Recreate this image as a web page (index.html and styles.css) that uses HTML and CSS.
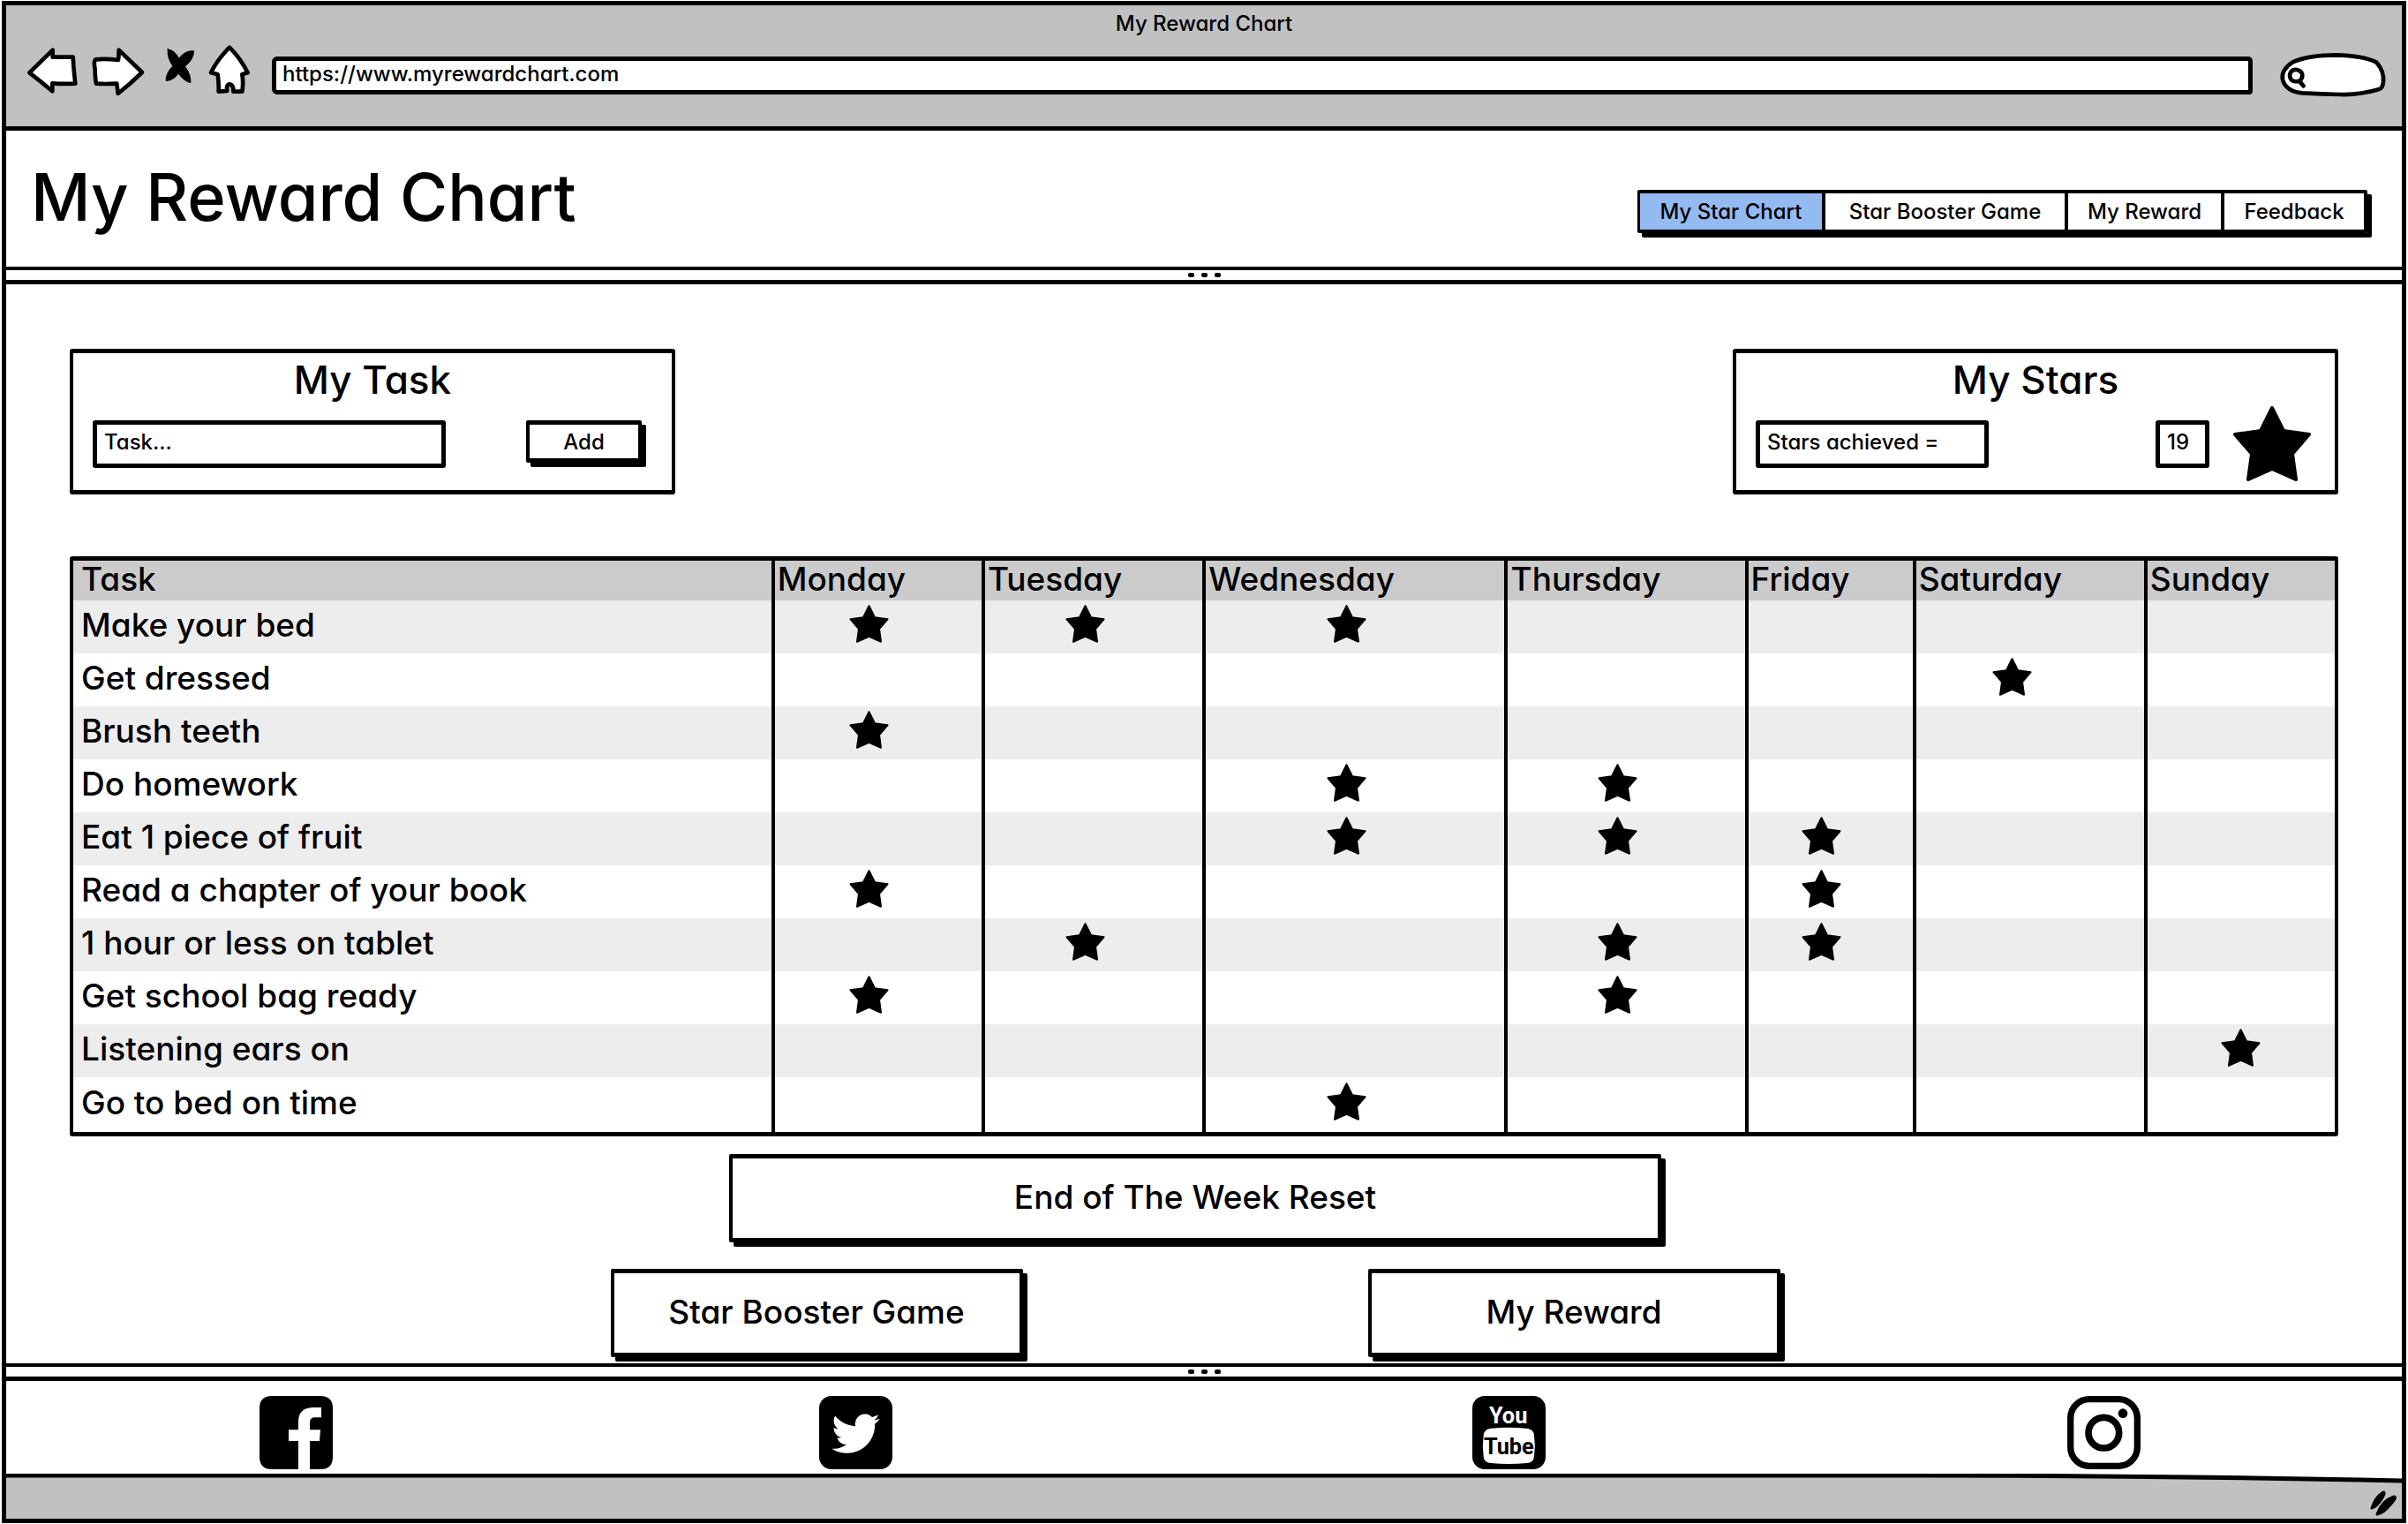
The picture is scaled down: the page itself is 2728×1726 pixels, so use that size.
FILE: index.html
```
<!DOCTYPE html>
<html lang="en">
<head>
<meta charset="utf-8">
<meta name="viewport" content="width=device-width, initial-scale=1">
<title>My Reward Chart</title>
<link rel="stylesheet" href="styles.css">
</head>
<body>
<svg class="defs" width="0" height="0" aria-hidden="true">
  <symbol id="star" viewBox="0 0 90 87">
    <path d="M45 3 58 29 87 33 68 55 72 84 45 72 18 84 22 55 3 33 32 29Z" fill="#000" stroke="#000" stroke-width="4" stroke-linejoin="round"/>
  </symbol>
</svg>
<div class="window">
  <header class="chrome">
    <div class="chrome-title">My Reward Chart</div>
    <div class="toolbar">
      <button class="tool" type="button" aria-label="Back">
        <svg width="60" height="60" viewBox="30 30 180 180"><path d="M40 121 119 44 119 68Q155 68 188 68Q190 110 196 158Q150 160 118 157L118 184Q78 150 40 121Z"/></svg>
      </button>
      <button class="tool" type="button" aria-label="Forward">
        <svg width="60" height="60" viewBox="247 30 180 180"><path d="M424 120 345 44Q345 62 343 78Q300 72 266 76Q258 80 264 110Q264 140 268 158Q300 160 338 158L342 192Q385 158 424 120Z"/></svg>
      </button>
      <button class="tool" type="button" aria-label="Stop">
        <svg width="50" height="60" viewBox="462 40 150 180"><path class="solid" d="M510 51Q532 52 548 82Q570 54 599 57Q600 84 569 110Q590 138 588 165Q566 162 546 134Q530 158 504 159Q502 134 527 108Q508 84 510 51Z"/></svg>
      </button>
      <button class="tool" type="button" aria-label="Home">
        <svg width="60" height="60" viewBox="648 35 180 180"><path d="M720 40Q758 78 782 126L763 132Q768 160 763 190L733 190Q734 166 720 165Q708 168 712 188L683 190Q684 160 680 132L657 126Q678 82 720 40Z"/></svg>
      </button>
      <input class="address" type="text" aria-label="Address" value="https://www.myrewardchart.com">
      <label class="search">
        <svg width="124" height="60" viewBox="123 36 372 180" aria-hidden="true">
          <path d="M205 187Q150 182 138 142Q132 108 172 82Q226 58 320 58Q410 60 456 82Q484 112 480 150Q478 172 464 175Q400 194 335 192Q270 190 205 187Z"/>
          <path class="glass" d="M194 146Q164 154 162 126Q166 106 186 108Q206 112 205 130Q202 144 194 146L209 163"/>
        </svg>
        <input type="search" aria-label="Search">
      </label>
    </div>
  </header>

  <div class="masthead">
    <h1>My Reward Chart</h1>
    <nav class="tabs">
      <a class="active" href="#chart">My Star Chart</a>
      <a href="#game">Star Booster Game</a>
      <a href="#reward">My Reward</a>
      <a href="#feedback">Feedback</a>
    </nav>
  </div>

  <div class="splitter"><i></i><i></i><i></i></div>

  <main>
    <div class="panels">
      <form class="panel">
        <h2>My Task</h2>
        <div class="panel-row">
          <input class="field field-task" type="text" aria-label="Task" placeholder="Task...">
          <button class="btn btn-add" type="button">Add</button>
        </div>
      </form>
      <section class="panel">
        <h2>My Stars</h2>
        <div class="panel-row panel-row-stars">
          <input class="field field-label" type="text" aria-label="Label" value="Stars achieved =">
          <input class="field field-count" type="text" aria-label="Stars achieved" value="19">
          <svg class="star-big" role="img" aria-label="Star"><use href="#star"/></svg>
        </div>
      </section>
    </div>

    <table class="chart" id="chart">
      <colgroup>
        <col class="w-task"><col class="w-mon"><col class="w-tue"><col class="w-wed"><col class="w-thu"><col class="w-fri"><col class="w-sat"><col class="w-sun">
      </colgroup>
      <thead>
        <tr><th>Task</th><th>Monday</th><th>Tuesday</th><th>Wednesday</th><th>Thursday</th><th>Friday</th><th>Saturday</th><th>Sunday</th></tr>
      </thead>
      <tbody>
        <tr><th>Make your bed</th><td><svg><use href="#star"/></svg></td><td><svg><use href="#star"/></svg></td><td><svg><use href="#star"/></svg></td><td></td><td></td><td class="sat"></td><td class="sun"></td></tr>
        <tr><th>Get dressed</th><td></td><td></td><td></td><td></td><td></td><td class="sat"><svg><use href="#star"/></svg></td><td class="sun"></td></tr>
        <tr><th>Brush teeth</th><td><svg><use href="#star"/></svg></td><td></td><td></td><td></td><td></td><td class="sat"></td><td class="sun"></td></tr>
        <tr><th>Do homework</th><td></td><td></td><td><svg><use href="#star"/></svg></td><td><svg><use href="#star"/></svg></td><td></td><td class="sat"></td><td class="sun"></td></tr>
        <tr><th>Eat 1 piece of fruit</th><td></td><td></td><td><svg><use href="#star"/></svg></td><td><svg><use href="#star"/></svg></td><td><svg><use href="#star"/></svg></td><td class="sat"></td><td class="sun"></td></tr>
        <tr><th>Read a chapter of your book</th><td><svg><use href="#star"/></svg></td><td></td><td></td><td></td><td><svg><use href="#star"/></svg></td><td class="sat"></td><td class="sun"></td></tr>
        <tr><th>1 hour or less on tablet</th><td></td><td><svg><use href="#star"/></svg></td><td></td><td><svg><use href="#star"/></svg></td><td><svg><use href="#star"/></svg></td><td class="sat"></td><td class="sun"></td></tr>
        <tr><th>Get school bag ready</th><td><svg><use href="#star"/></svg></td><td></td><td></td><td><svg><use href="#star"/></svg></td><td></td><td class="sat"></td><td class="sun"></td></tr>
        <tr><th>Listening ears on</th><td></td><td></td><td></td><td></td><td></td><td class="sat"></td><td class="sun"><svg><use href="#star"/></svg></td></tr>
        <tr><th>Go to bed on time</th><td></td><td></td><td><svg><use href="#star"/></svg></td><td></td><td></td><td class="sat"></td><td class="sun"></td></tr>
      </tbody>
    </table>

    <div class="actions">
      <button class="btn btn-reset" type="button">End of The Week Reset</button>
      <div class="actions-row">
        <button class="btn btn-large" type="button">Star Booster Game</button>
        <button class="btn btn-large" type="button">My Reward</button>
      </div>
    </div>
  </main>

  <div class="splitter"><i></i><i></i><i></i></div>

  <footer class="social">
    <a href="#facebook" aria-label="Facebook">
      <svg viewBox="0 0 249 249"><path fill-rule="evenodd" d="M42 0H207Q249 0 249 42V207Q249 249 207 249H171V153H204L207 115H171V90Q171 73 188 73H210V39H180Q132 41 132 88V115H99V153H132V249H42Q0 249 0 207V42Q0 0 42 0Z"/></svg>
    </a>
    <a href="#twitter" aria-label="Twitter">
      <svg viewBox="0 0 249 249"><rect width="249" height="249" rx="42"/><path fill="#fff" transform="translate(43 46) scale(6.8)" d="M23.953 4.57a10 10 0 01-2.825.775 4.958 4.958 0 002.163-2.723c-.951.555-2.005.959-3.127 1.184a4.92 4.92 0 00-8.384 4.482C7.69 8.095 4.067 6.13 1.64 3.162a4.822 4.822 0 00-.666 2.475c0 1.71.87 3.213 2.188 4.096a4.904 4.904 0 01-2.228-.616v.06a4.923 4.923 0 003.946 4.827 4.996 4.996 0 01-2.212.085 4.936 4.936 0 004.604 3.417 9.867 9.867 0 01-6.102 2.105c-.39 0-.779-.023-1.17-.067a13.995 13.995 0 007.557 2.209c9.053 0 13.998-7.496 13.998-13.985 0-.21 0-.42-.015-.63A9.935 9.935 0 0024 4.59z"/></svg>
    </a>
    <a href="#youtube" aria-label="YouTube">
      <svg viewBox="0 0 249 249"><rect width="249" height="249" rx="42"/><path fill="#fff" d="M64 110Q124 104 184 110Q208 112 210 134Q215 170 210 206Q208 226 184 228Q124 234 64 228Q40 226 38 206Q33 170 38 134Q40 112 64 110Z"/><text class="yt yt-top" x="122" y="93">You</text><text class="yt" x="124" y="199">Tube</text></svg>
    </a>
    <a href="#instagram" aria-label="Instagram">
      <svg viewBox="0 0 249 249"><rect x="11" y="11" width="227" height="227" rx="64" fill="none" stroke="#000" stroke-width="22"/><circle cx="124" cy="125" r="52" fill="none" stroke="#000" stroke-width="23"/><circle cx="189" cy="59" r="16"/></svg>
    </a>
  </footer>

  <div class="statusbar">
    <svg class="statusbar-edge" viewBox="0 0 2714 50" preserveAspectRatio="none" aria-hidden="true"><path d="M-6 2H2180Q2420 2 2722 8V60H-6Z"/></svg>
    <svg class="grip" width="36" height="32" viewBox="0 0 36 32" aria-hidden="true"><path d="M4 22Q8 9 17 4Q20 4 15 12Q9 21 4 22ZM10 29Q15 14 29 9Q33 9 26 17Q17 28 10 29Z"/></svg>
  </div>
</div>
</body>
</html>
```
FILE: styles.css
```
* { box-sizing: border-box; }

body {
  margin: 0;
  padding: 1px 2px;
  background: #fff;
  color: #000;
  font-family: Inter, "Noto Sans", sans-serif;
  font-feature-settings: "cv11";
  font-size: 24px;
  font-weight: 500;
  line-height: 40px;
}

h1, h2 { margin: 0; font-weight: 500; }
a { color: inherit; text-decoration: none; }
button, input { font: inherit; font-feature-settings: inherit; color: inherit; }
.defs { position: absolute; }

.window {
  display: flex;
  flex-direction: column;
  min-height: calc(100vh - 2px);
  border: 5px solid #000;
}

/* browser chrome */
.chrome {
  height: 142px;
  padding-top: 1px;
  background: #c1c1c1;
  border-bottom: 5px solid #000;
}
.chrome-title { text-align: center; }
.toolbar {
  display: flex;
  align-items: center;
  gap: 12px;
  margin-top: 5px;
  padding: 0 16px 0 23px;
}
.toolbar svg { display: block; overflow: visible; }
.toolbar path {
  fill: #fff;
  stroke: #000;
  stroke-width: 14px;
  stroke-linejoin: round;
  stroke-linecap: round;
}
.toolbar .solid { fill: #000; stroke-width: 2px; }
.toolbar .glass { fill: none; }
.tool { padding: 0 0 6px; border: 0; background: none; }
.address {
  flex: 1;
  min-width: 0;
  height: 43px;
  padding: 0 7px 4px;
  border: 5px solid #000;
  border-radius: 6px 5px 4px 6px;
  background: #fff;
}
.search { position: relative; margin-left: 17px; }
.search input {
  position: absolute;
  inset: 12px 14px 12px 34px;
  width: 76px;
  padding: 0;
  border: 0;
  outline: 0;
  background: none;
  appearance: none;
}

/* page header */
.masthead {
  display: flex;
  justify-content: space-between;
  align-items: flex-end;
  height: 154px;
  padding: 0 39px 38px 28px;
}
h1 { font-size: 74px; line-height: 82px; }
.tabs {
  display: grid;
  grid-template-columns: 206px 275px 177px 162px;
  border: 4px solid #000;
  border-left-width: 3px;
  box-shadow: 5px 5px 0 #000;
  border-radius: 2px;
}
.tabs a { padding-top: 1px; text-align: center; }
.tabs a + a { border-left: 4px solid #000; }
.tabs .active { background: #94baf2; }

.splitter {
  display: flex;
  justify-content: center;
  align-items: center;
  gap: 8px;
  height: 20px;
  border: solid #000;
  border-width: 4px 0 5px;
}
.splitter i { width: 7px; height: 5px; background: #000; border-radius: 2px; }

main { flex: 1; padding: 73px 72px 7px; }

/* panels */
.panels { display: flex; justify-content: space-between; }
.panel {
  width: 686px;
  padding-bottom: 10px;
  border: solid #000;
  border-width: 5px 4px;
  border-radius: 3px;
}
h2 { font-size: 44px; line-height: 60px; text-align: center; }
.panel-row {
  display: flex;
  align-items: center;
  justify-content: space-between;
  height: 85px;
  padding: 0 34px 0 22px;
}
.panel-row-stars { gap: 26px; padding-right: 26px; }
.field {
  height: 54px;
  padding: 0 8px 4px;
  border: 5px solid #000;
  border-radius: 3px;
  background: #fff;
}
.field::placeholder { color: #000; opacity: 1; }
.field-task { width: 400px; }
.field-label { width: 264px; margin-right: auto; }
.field-count { width: 61px; }
.star-big { width: 90px; height: 87px; }

.btn {
  padding: 0;
  border: solid #000;
  border-width: 5px 4px;
  border-radius: 2px;
  background: #fff;
  box-shadow: 5px 5px 0 #000;
}
.btn-add { width: 131px; height: 48px; padding-bottom: 2px; margin-bottom: 5px; }

/* reward table */
.chart {
  width: 100%;
  margin-top: 70px;
  table-layout: fixed;
  border: solid #000;
  border-width: 5px 4px;
  border-radius: 3px;
  border-spacing: 0;
  font-size: 37px;
}
.w-task { width: 30.86%; }
.w-mon { width: 9.3%; }
.w-tue { width: 9.77%; }
.w-wed { width: 13.36%; }
.w-thu { width: 10.62%; }
.w-fri { width: 7.42%; }
.w-sat { width: 10.23%; }
.w-sun { width: 8.44%; }
.chart th, .chart td { border-left: 4px solid #000; }
.chart th { padding: 0 0 4px 3px; font-weight: 500; text-align: left; white-space: nowrap; }
.chart tr > :first-child { border-left: 0; padding-left: 9px; }
.chart thead th { height: 45px; line-height: 41px; background: #cbcbcb; }
.chart td { height: 60px; padding: 0 20px 8px 0; text-align: center; }
.chart tr:last-child td { height: 62px; }
.chart .sat { padding-right: 40px; }
.chart .sun { padding-right: 0; }
.chart tbody tr:nth-child(odd) { background: #ededed; }
.chart svg { display: block; width: 45px; height: 45px; margin: 0 auto; }

/* actions */
.actions {
  display: flex;
  flex-direction: column;
  align-items: center;
  gap: 30px;
  margin-top: 20px;
  padding-right: 20px;
}
.actions .btn { height: 100px; font-size: 37px; padding-bottom: 3px; }
.actions .btn-reset { width: 1056px; }
.actions-row { display: flex; gap: 391px; }
.btn-large { width: 467px; }

/* footer */
.social {
  display: grid;
  grid-template-columns: 634fr 740fr 674fr 379fr;
  height: 105px;
  padding: 17px 0 0 287px;
}
.social a { width: 83px; height: 83px; }
.social svg { display: block; width: 83px; height: 83px; }
.yt { font-family: Roboto, sans-serif; font-size: 76px; font-weight: 700; text-anchor: middle; }
.yt-top { fill: #fff; }

.statusbar {
  position: relative;
  display: flex;
  justify-content: flex-end;
  height: 51px;
  padding: 17px 2px 0 0;
}
.statusbar-edge { position: absolute; inset: 0; width: 100%; height: 100%; }
.statusbar-edge path { fill: #c1c1c1; stroke: #000; stroke-width: 5px; vector-effect: non-scaling-stroke; }
.grip { position: relative; }
.grip path { stroke: #000; stroke-width: 3px; stroke-linejoin: round; }
```
